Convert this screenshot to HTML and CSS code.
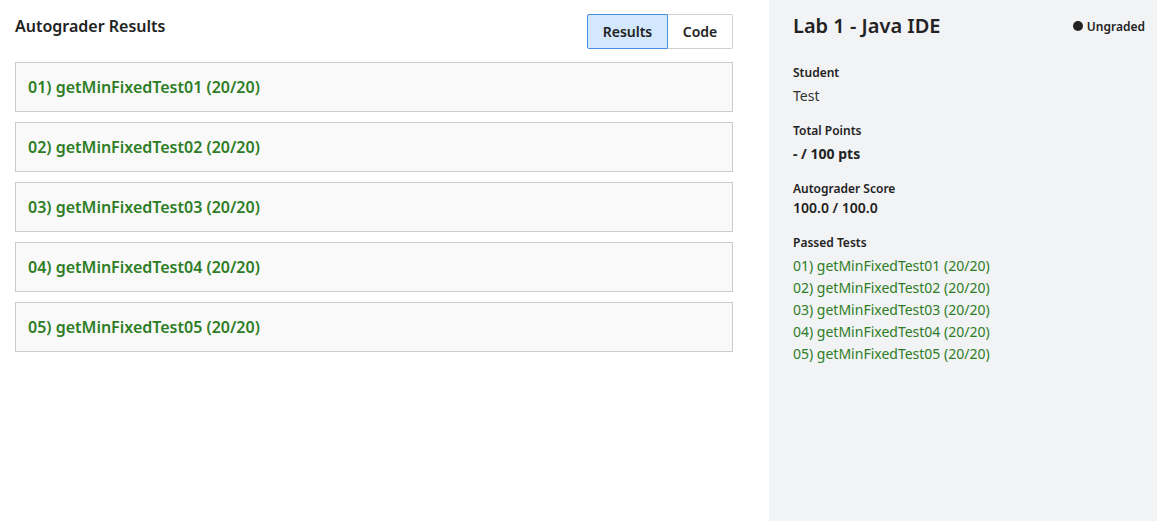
FILE: index.html
```html
<!DOCTYPE html>
<html>
<head>
<meta charset="utf-8">
<link rel="stylesheet" href="styles.css">
</head>
<body>
<div class="page">
  <main class="main">
    <div class="main-head">
      <h1 class="main-title">Autograder Results</h1>
      <div class="toggle">
        <button class="toggle-btn toggle-btn-active">Results</button>
        <button class="toggle-btn">Code</button>
      </div>
    </div>
    <div class="tests">
      <div class="test"><span class="test-name">01) getMinFixedTest01 (20/20)</span></div>
      <div class="test"><span class="test-name">02) getMinFixedTest02 (20/20)</span></div>
      <div class="test"><span class="test-name">03) getMinFixedTest03 (20/20)</span></div>
      <div class="test"><span class="test-name">04) getMinFixedTest04 (20/20)</span></div>
      <div class="test"><span class="test-name">05) getMinFixedTest05 (20/20)</span></div>
    </div>
  </main>
  <aside class="side">
    <div class="side-head">
      <h2 class="side-title">Lab 1 - Java IDE</h2>
      <span class="status"><span class="status-dot"></span>Ungraded</span>
    </div>
    <div class="field">
      <div class="field-label">Student</div>
      <div class="field-value">Test</div>
    </div>
    <div class="field">
      <div class="field-label">Total Points</div>
      <div class="field-value field-bold">- / 100 pts</div>
    </div>
    <div class="field">
      <div class="field-label">Autograder Score</div>
      <div class="field-value field-semi field-tight">100.0 / 100.0</div>
    </div>
    <div class="field">
      <div class="field-label">Passed Tests</div>
      <ul class="passed">
        <li>01) getMinFixedTest01 (20/20)</li>
        <li>02) getMinFixedTest02 (20/20)</li>
        <li>03) getMinFixedTest03 (20/20)</li>
        <li>04) getMinFixedTest04 (20/20)</li>
        <li>05) getMinFixedTest05 (20/20)</li>
      </ul>
    </div>
  </aside>
</div>
</body>
</html>
```
FILE: styles.css
```css
* { box-sizing: border-box; }
html, body { margin: 0; padding: 0; height: 100%; }
body {
  font-family: "Noto Sans", "Open Sans", sans-serif;
  color: #222;
  background: #fff;
}
.page {
  display: flex;
  height: 521px;
}
.main {
  width: 769px;
  padding: 14px 36px 0 15px;
  background: #fff;
}
.main-head {
  display: flex;
  justify-content: space-between;
  align-items: flex-start;
  height: 48px;
}
.main-title {
  margin: 1px 0 0 0;
  font-size: 16px;
  font-weight: 600;
  line-height: 22px;
  color: #222;
}
.toggle {
  display: flex;
}
.toggle-btn {
  font-family: inherit;
  font-size: 14px;
  font-weight: 600;
  color: #222;
  background: #fff;
  border: 1px solid #d0d0d0;
  height: 35px;
  padding: 0 14px;
  margin: 0;
  cursor: pointer;
}
.toggle-btn:first-child { border-radius: 2px 0 0 2px; }
.toggle-btn:last-child { border-radius: 0 2px 2px 0; border-left: none; width: 65px; }
.toggle-btn-active {
  background: #d3e8fd;
  border-color: #4a8fe0;
  width: 81px;
}
.tests {
  display: flex;
  flex-direction: column;
  gap: 10px;
}
.test {
  height: 50px;
  background: #f9f9f9;
  border: 1px solid #cccccc;
  display: flex;
  align-items: center;
  padding: 0 12px;
}
.test-name {
  color: #2d7d25;
  font-size: 16px;
  font-weight: 600;
}
.side {
  flex: 1;
  background: #f2f3f5;
  padding: 12px 12px 0 24px;
}
.side-head {
  display: flex;
  justify-content: space-between;
  align-items: center;
  height: 28px;
  margin-bottom: 24px;
}
.side-title {
  margin: 0;
  font-size: 20px;
  font-weight: 600;
  line-height: 28px;
  color: #222;
}
.status {
  display: flex;
  align-items: center;
  gap: 4px;
  font-size: 12px;
  font-weight: 600;
  color: #222;
}
.status-dot {
  width: 10px;
  height: 10px;
  border-radius: 50%;
  background: #222;
}
.field { margin-bottom: 15px; }
.field-label {
  font-size: 12px;
  font-weight: 600;
  line-height: 18px;
  color: #222;
}
.field-value {
  font-size: 14px;
  line-height: 22px;
  margin-top: 3px;
  color: #333;
}
.field-bold { font-weight: 700; color: #222; }
.field-semi { font-weight: 600; color: #222; }
.field-tight { margin-top: -1px; }
.passed {
  list-style: none;
  margin: 3px 0 0 0;
  padding: 0;
}
.passed li {
  font-size: 14px;
  line-height: 22px;
  color: #2d7d25;
}
```
